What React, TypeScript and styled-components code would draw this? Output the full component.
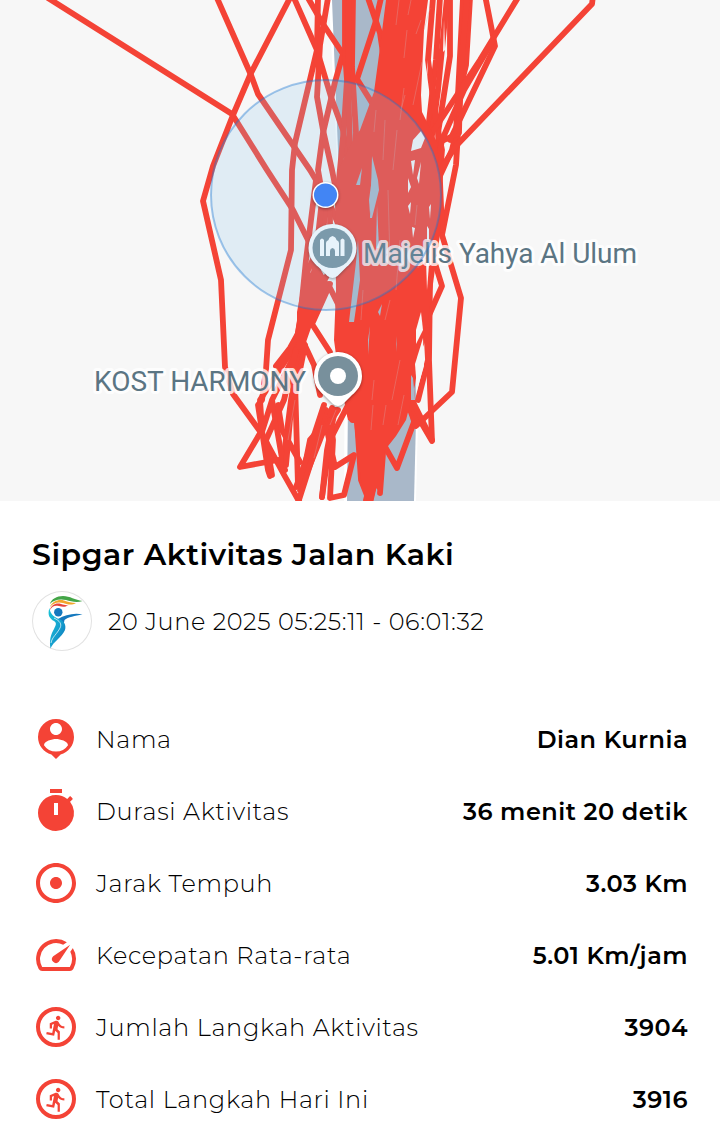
import React from "react";
import styled, { createGlobalStyle } from "styled-components";
import { MdPersonPin, MdAdjust, MdDirectionsRun } from "react-icons/md";

const RED = "#f44336";

type Stat = {
  label: string;
  value: string;
  icon: React.ReactNode;
};

const stats: Stat[] = [
  { label: "Nama", value: "Dian Kurnia", icon: <MdPersonPin size={48} /> },
  { label: "Durasi Aktivitas", value: "36 menit 20 detik", icon: <TimerIcon /> },
  { label: "Jarak Tempuh", value: "3.03 Km", icon: <MdAdjust size={48} /> },
  { label: "Kecepatan Rata-rata", value: "5.01 Km/jam", icon: <SpeedIcon /> },
  { label: "Jumlah Langkah Aktivitas", value: "3904", icon: <StepsIcon /> },
  { label: "Total Langkah Hari Ini", value: "3916", icon: <StepsIcon /> },
];

// walking track, one polyline per pass
const tracks = [
  "48,-2 232,114 267,170 293,210 309,242 318,270",
  "217,-2 251,75 258,94 310,170 328,200 345,240",
  "291,-4 251,73 233,115 213,166 203,201 221,280 225,367 233,394 262,434 283,473 300,503",
  "294,-2 317,50 331,97 343,130 352,190",
  "308,-2 323,24 343,54 335,82 323,133 318,170 326,215",
  "318,-2 317,50 295,143 292,170 291,250 268,340 266,370 262,400 258,405 268,470 270,476",
  "328,-2 320,45 317,97 323,130 332,170 338,200",
  "368,-2 380,33 384,60",
  "381,-2 375,24 357,79 372,103",
  "345,-2 345,52 347,80 344,127 338,190",
  "353,-2 352,67 356,133 350,200",
  "349,-2 348,80 350,150",
  "316,180 306,260 300,320 296,345 278,372 260,400 262,430 240,467 278,460 285,470",
  "328,190 322,240 308,270 302,310 296,345 295,380 298,486",
  "322,200 312,290 305,330 300,350 291,400 282,470",
  "330,200 330,270 314,300 302,340 272,400 262,432 272,400 284,470",
  "328,284 338,304 342,320",
  "330,284 312,324 330,352",
  "312,290 300,330 290,348 276,366",
  "300,335 314,365 320,395",
  "336,410 310,440 300,490 320,440 332,408",
  "348,405 330,440 322,497",
  "330,420 333,440 330,498 344,495 354,455 335,467 327,430",
  "326,410 296,487",
  "296,350 284,400 266,440 272,475",
  "305,345 290,420 286,465",
  "278,405 282,430 300,462",
  "324,405 298,484",
  "335,410 327,450 322,497",
  "338,410 318,440 298,503",
  "348,410 352,420 376,420 382,450",
  "357,420 361,480 370,503 380,460 384,410",
  "376,430 374,470 366,500",
  "380,493 384,440 398,412 410,380",
  "384,445 397,468 414,422 410,390 396,400",
  "408,404 416,426 452,392 461,298 442,235 456,165 460,100",
  "408,400 432,441 429,360 430,280 426,240",
  "434,260 442,286 426,322 428,360 418,400",
  "427,330 410,370 412,400 432,440",
  "450,-2 450,56 438,133 442,230",
  "440,-2 436,60 428,130",
  "447,-2 438,90 430,150",
  "433,-2 428,60 436,120 442,150 438,200",
  "463,-2 456,133 452,150 438,180",
  "470,-2 466,65 460,90 459,133 440,142 414,157",
  "467,-2 460,80",
  "482,-20 495,46 462,115 450,140",
  "519,-4 480,60 434,130",
  "492,42 464,90 442,140 438,162",
  "593,-4 592,4 456,146 440,170 432,190",
];

// gaps that stay open inside the dense part of the track
const roadGaps = [
  "372,156 378,180 379,190 372,218 370,218 371,190",
  "377,205 379,248 376,248",
  "356,262 358,240 360,280 354,322 349,322",
  "362,168 360,185 356,185",
  "369,200 372,178 376,192 370,214",
  "368,340 370,326 368,355",
  "396,352 397,336 397,344",
  "378,312 382,304 380,316",
  "411,375 413,378 415,400 411,400",
];

const lightGaps = [
  "413,140 421,131 425,138 421,148 411,151",
  "411,161 415,160 413,175",
  "408,178 411,187 408,193",
  "417,178 421,162 419,184",
  "408,206 411,202 410,214",
  "412,227 415,228 413,238",
  "429,207 431,204 430,219",
  "427,226 429,229 429,240 427,240",
  "416,330 421,312 423,330 416,344",
  "415,364 423,338 424,366 417,390",
  "424,93 428,60 426,98",
  "443,52 444,20 445,50",
  "426,260 430,252 427,290",
];

const slivers = [
  "M399 0L396 25M407 30L404 58M422 62L413 105M421 20L416 34M430 8L424 30M404 88L400 120M411 0L408 15",
  "M385 120L383 160M397 130L393 170M376 110L374 132M405 95L401 110M388 190L390 260M400 240L396 290",
  "M390 300L385 320M374 380L372 400M400 360L392 400M404 395L398 425M373 405L371 430M386 405L383 425",
  "M417 205L415 225M420 250L418 268M363 290L361 320M322 425L314 458M336 410L330 425M295 400L288 440",
];

function Track() {
  return (
    <MapCanvas viewBox="0 0 720 501">
      <path d="M331 0L347 320L346 501" fill="none" stroke="#fff" strokeWidth={4} />
      <path d="M332 0H402L417 420L415 501H347L348 400Z" fill="#a9b8c9" />
      <path d="M417 420L415 501" stroke="#fff" strokeWidth={2} />
      <g fill="none" stroke={RED} strokeWidth={5.8} strokeLinejoin="round" strokeLinecap="round">
        {tracks.map((points) => (
          <polyline key={points} points={points} />
        ))}
      </g>
      <path fill={RED} d="M318 265L329 284L312 325L304 348L297 350L297 312L303 280Z" />
      <path
        fill={RED}
        d="M386 0H428L424 30L421 95L422 112L437 142L441 190L440 235L436 262L428 320L420 350L415 385L406 420L396 436L385 450L381 493L376 488L373 501L367 501L361 480L354 422L348 420L338 370L334 340L336 290L335 200L338 170L352 142L360 130L374 92L379 55Z"
      />
      <g fill="#a9b8c9">
        {roadGaps.map((points) => (
          <polygon key={points} points={points} />
        ))}
      </g>
      <g fill="#f7f7f7">
        {lightGaps.map((points) => (
          <polygon key={points} points={points} />
        ))}
      </g>
      {slivers.map((d) => (
        <path key={d} d={d} stroke="#d9a5a8" strokeWidth={0.7} opacity={0.5} />
      ))}

      <Pin x={332.5} y={248} color="#78909c">
        <path
          fill="#fff"
          d="M320 240q2-3 4 0V256H320ZM340.500 240q2-3 4 0V256H340.500ZM326 256V243q0-2 2.500-3q.5-3 4-4q3.500 1 4 4q2.500 1 2.500 3V256H335V251q0-2.500-2.500-3q-2.500.5-2.500 3V256Z"
        />
      </Pin>
      <PlaceName x={363} y={262.500} textLength={274}>
        Majelis Yahya Al Ulum
      </PlaceName>
      <circle cx={326} cy={195} r={115} fill="rgb(137,197,237)" fillOpacity={0.2} stroke="#1976d2" strokeOpacity={0.4} strokeWidth={2} />
      <PlaceName x={94} y={391} textLength={212}>
        KOST HARMONY
      </PlaceName>
      <Pin x={338} y={376} color="#78909c">
        <circle cx={338} cy={376} r={8} fill="#fff" />
      </Pin>
      <Shadowed>
        <circle cx={325.500} cy={195} r={13} fill="#fff" />
      </Shadowed>
      <circle cx={325.500} cy={195} r={11.500} fill="#4285f4" />
    </MapCanvas>
  );
}

type PinProps = { x: number; y: number; color: string; children: React.ReactNode };

function Pin({ x, y, color, children }: PinProps) {
  return (
    <Shadowed>
      <path
        transform={`translate(${x} ${y})`}
        fill="#fff"
        d="M-24 0A24 24 0 0 1 24 0C24 9 19 15 14 19L5 28Q0 32-5 28L-14 19C-19 15-24 9-24 0Z"
      />
      <circle cx={x} cy={y} r={20} fill={color} />
      {children}
    </Shadowed>
  );
}

function TimerIcon() {
  return (
    <svg width="48" height="48" viewBox="0 0 24 24" fill="currentColor">
      <path d="M15 1H9v2h6V1zm4.030 6.390l1.420-1.420c-.43-.51-.9-.99-1.410-1.410l-1.420 1.420A8.962 8.962 0 0 0 12 4c-4.970 0-9 4.030-9 9s4.020 9 9 9a8.994 8.994 0 0 0 7.030-14.610zM13 14h-2V8h2v6z" />
    </svg>
  );
}

function SpeedIcon() {
  return (
    <svg width="48" height="48" viewBox="0 0 24 24" fill="currentColor">
      <path d="M20.380 8.570l-1.230 1.850a8 8 0 0 1-.22 7.580H5.070A8 8 0 0 1 15.580 6.850l1.850-1.230A10 10 0 0 0 3.350 19a2 2 0 0 0 1.720 1h13.850a2 2 0 0 0 1.740-1 10 10 0 0 0-.27-10.440z" />
      <path d="M10.590 15.410a2 2 0 0 0 2.830 0l5.660-8.490-8.490 5.660a2 2 0 0 0 0 2.830z" />
    </svg>
  );
}

function StepsIcon() {
  return (
    <Ring>
      <MdDirectionsRun size={27} />
    </Ring>
  );
}

function Logo() {
  return (
    <svg width="60" height="60" viewBox="0 0 60 60">
      <defs>
        <linearGradient id="body" x1="0" y1="0" x2="1" y2="1">
          <stop offset="0" stopColor="#19c3d6" />
          <stop offset="0.5" stopColor="#17a5d0" />
          <stop offset="1" stopColor="#0b6fb8" />
        </linearGradient>
      </defs>
      <path fill="#43a547" d="M18 13C19 8 25 5 31 5C38 5 43 9 50.500 10C45 12 39 10.500 34 9C28 7.500 21 9 18 13Z" />
      <path fill="#f2a62b" d="M18 16C20 10 27 8 32 9.500C36 11 40 12 44 12C40 14.500 35 13.500 31 12C26 10.500 21 12 18 16Z" />
      <path fill="#e8453c" d="M18 19C19 14 24 11.500 29 13C32 14 34 14.500 36.500 14C33 16.500 30 16 27 15C23 14 20 15 18 19Z" />
      <circle cx="26.300" cy="21.300" r="4.200" fill="#1478be" />
      <path fill="#1478be" d="M26 28C33 24 42 21.500 50.500 23.500C43 25 36 26 32.500 29L31 36Z" />
      <path fill="url(#body)" d="M17.500 17C15 24 18 28 22 30C25 32 24 34 22 38C19 43 17 49 18.500 57.500C21 51 30 46 33 39C34.500 34 32 29.500 27 28C22 26 18 23 17.500 17Z" />
      <path fill="none" stroke="#fff" strokeWidth="0.7" d="M22 27C28 30 30 33 28 37C25 43 20 46 19 52" />
    </svg>
  );
}

export default function App() {
  return (
    <>
      <GlobalStyle />
      <Page>
        <Track />
        <Details>
          <Title>Sipgar Aktivitas Jalan Kaki</Title>
          <Session>
            <Avatar>
              <Logo />
            </Avatar>
            <SessionTime>20 June 2025 05:25:11 - 06:01:32</SessionTime>
          </Session>
          <StatList>
            {stats.map((stat) => (
              <StatRow key={stat.label}>
                <StatIcon>{stat.icon}</StatIcon>
                <StatLabel>{stat.label}</StatLabel>
                <StatValue>{stat.value}</StatValue>
              </StatRow>
            ))}
          </StatList>
        </Details>
      </Page>
    </>
  );
}

const GlobalStyle = createGlobalStyle`
  * {
    box-sizing: border-box;
  }
  body {
    margin: 0;
    background: #fff;
    color: #000;
    font-family: Montserrat, Inter, "Liberation Sans", sans-serif;
  }
`;

const Page = styled.main`
  width: 720px;
  height: 1136px;
  overflow: hidden;
`;

const MapCanvas = styled.svg`
  display: block;
  width: 720px;
  height: 501px;
  background: #f7f7f7;
`;

const Shadowed = styled.g`
  filter: drop-shadow(0 1px 1.5px rgba(0, 0, 0, 0.4));
`;

const PlaceName = styled.text`
  font-family: Roboto, sans-serif;
  font-size: 28px;
  fill: #5b7583;
  stroke: rgba(255, 255, 255, 0.8);
  stroke-width: 6px;
  stroke-linejoin: round;
  paint-order: stroke;
`;

const Details = styled.section`
  padding: 34px 32px 0;
`;

const Title = styled.h1`
  margin: 0;
  font-size: 30px;
  font-weight: 600;
  line-height: 40px;
  letter-spacing: 0.52px;
  white-space: nowrap;
`;

const Session = styled.div`
  display: flex;
  align-items: center;
  gap: 16px;
  margin-top: 16px;
`;

const Avatar = styled.div`
  width: 60px;
  height: 60px;
  border-radius: 50%;
  box-shadow: inset 0 0 0 1px #e2e2e2;
`;

const SessionTime = styled.span`
  font-size: 24px;
  font-weight: 350;
  letter-spacing: 0.6px;
  white-space: nowrap;
`;

const StatList = styled.div`
  margin-top: 52px;
`;

const StatRow = styled.div`
  display: flex;
  align-items: center;
  height: 72px;
`;

const StatIcon = styled.span`
  display: flex;
  align-items: center;
  justify-content: center;
  width: 48px;
  height: 48px;
  margin-right: 16px;
  color: ${RED};
`;

const Ring = styled.span`
  display: flex;
  align-items: center;
  justify-content: center;
  width: 40px;
  height: 40px;
  padding-left: 1px;
  border: 4px solid ${RED};
  border-radius: 50%;
`;

const StatLabel = styled.span`
  flex: 1;
  padding-top: 2px;
  font-size: 24px;
  font-weight: 350;
  line-height: 30px;
  letter-spacing: 0.68px;
  white-space: nowrap;
`;

const StatValue = styled.span`
  padding-top: 2px;
  font-size: 24px;
  font-weight: 600;
  line-height: 30px;
  letter-spacing: 0.5px;
  white-space: nowrap;
`;
